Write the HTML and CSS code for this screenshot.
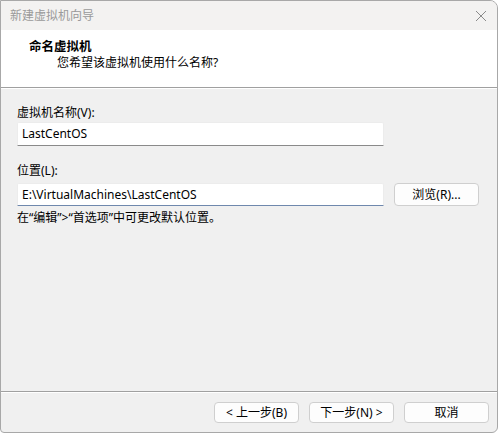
FILE: index.html
```html
<!DOCTYPE html>
<html lang="zh-CN">
<head>
<meta charset="utf-8">
<title>新建虚拟机向导</title>
<link rel="stylesheet" href="styles.css">
</head>
<body>
<div class="window">
  <div class="titlebar">
    <span class="title">新建虚拟机向导</span>
    <span class="close">
      <svg width="12" height="12" viewBox="0 0 12 12"><path d="M1 1 L11 11 M11 1 L1 11" stroke="#8a8a8a" stroke-width="1" fill="none"/></svg>
    </span>
  </div>
  <div class="header">
    <div class="h-title">命名虚拟机</div>
    <div class="h-sub">您希望该虚拟机使用什么名称?</div>
  </div>
  <div class="content">
    <div class="label first">虚拟机名称(V):</div>
    <div class="row">
      <div class="input">LastCentOS</div>
    </div>
    <div class="label second">位置(L):</div>
    <div class="row">
      <div class="input focus">E:\VirtualMachines\LastCentOS</div>
      <button class="btn browse">浏览(R)...</button>
    </div>
    <div class="hint">在“编辑”&gt;“首选项”中可更改默认位置。</div>
  </div>
  <div class="footer">
    <button class="btn">&lt; 上一步(B)</button>
    <button class="btn">下一步(N) &gt;</button>
    <button class="btn">取消</button>
  </div>
</div>
</body>
</html>
```
FILE: styles.css
```css
* { box-sizing: border-box; }
html, body {
  margin: 0;
  padding: 0;
  background: #ffffff;
}
body {
  font-family: "Noto Sans", "Noto Sans CJK SC", sans-serif;
  font-size: 12px;
  line-height: 16px;
  color: #000;
}
.window {
  width: 498px;
  height: 433px;
  border: 1px solid #a8a8a8;
  border-radius: 0 8px 6px 4px;
  background: #f0f0f0;
  display: flex;
  flex-direction: column;
  overflow: hidden;
}
.titlebar {
  height: 29px;
  background: #f3f2f1;
  display: flex;
  align-items: center;
  justify-content: space-between;
  padding: 0 8px 0 9px;
}
.title {
  color: #9a9a9a;
  font-size: 12px;
}
.close {
  display: flex;
  align-items: center;
  justify-content: center;
  width: 14px;
  height: 14px;
  margin-right: 1px;
}
.header {
  background: #ffffff;
  height: 58px;
  padding: 9px 0 0 28px;
  border-bottom: 1px solid #a0a0a0;
  box-shadow: 0 1px 0 #ffffff;
}
.h-title {
  font-weight: bold;
  font-size: 12.5px;
}
.h-sub {
  padding-left: 28px;
}
.content {
  padding: 0 0 0 16px;
  display: flex;
  flex-direction: column;
}
.label.first { margin-top: 17px; margin-bottom: 1px; }
.label.second { margin-top: 17px; margin-bottom: 4px; }
.row {
  display: flex;
  align-items: flex-start;
  gap: 10px;
}
.input {
  width: 367px;
  height: 24px;
  background: #ffffff;
  border: 1px solid #ececec;
  border-bottom: 1px solid #8a8a8a;
  border-radius: 2px 2px 0 0;
  padding: 0 4px;
  line-height: 22px;
  white-space: nowrap;
}
.input.focus {
  height: 23px;
  line-height: 21px;
  border-bottom-color: #6f88ad;
}
.btn {
  font-family: "Noto Sans", "Noto Sans CJK SC", sans-serif;
  font-size: 12px;
  line-height: 16px;
  color: #000;
  background: #fdfdfd;
  border: 1px solid #cfcfcf;
  border-radius: 4px;
  width: 85px;
  height: 22px;
  padding: 0;
  margin: 0;
}
.browse {
  height: 23px;
}
.hint {
  margin-top: 4px;
}
.footer {
  margin-top: auto;
  border-top: 1px solid #a0a0a0;
  box-shadow: inset 0 1px 0 #ffffff;
  display: flex;
  justify-content: flex-end;
  gap: 10px;
  padding: 10px 8px 9px 0;
}
.footer .btn {
  height: 21px;
}
```
